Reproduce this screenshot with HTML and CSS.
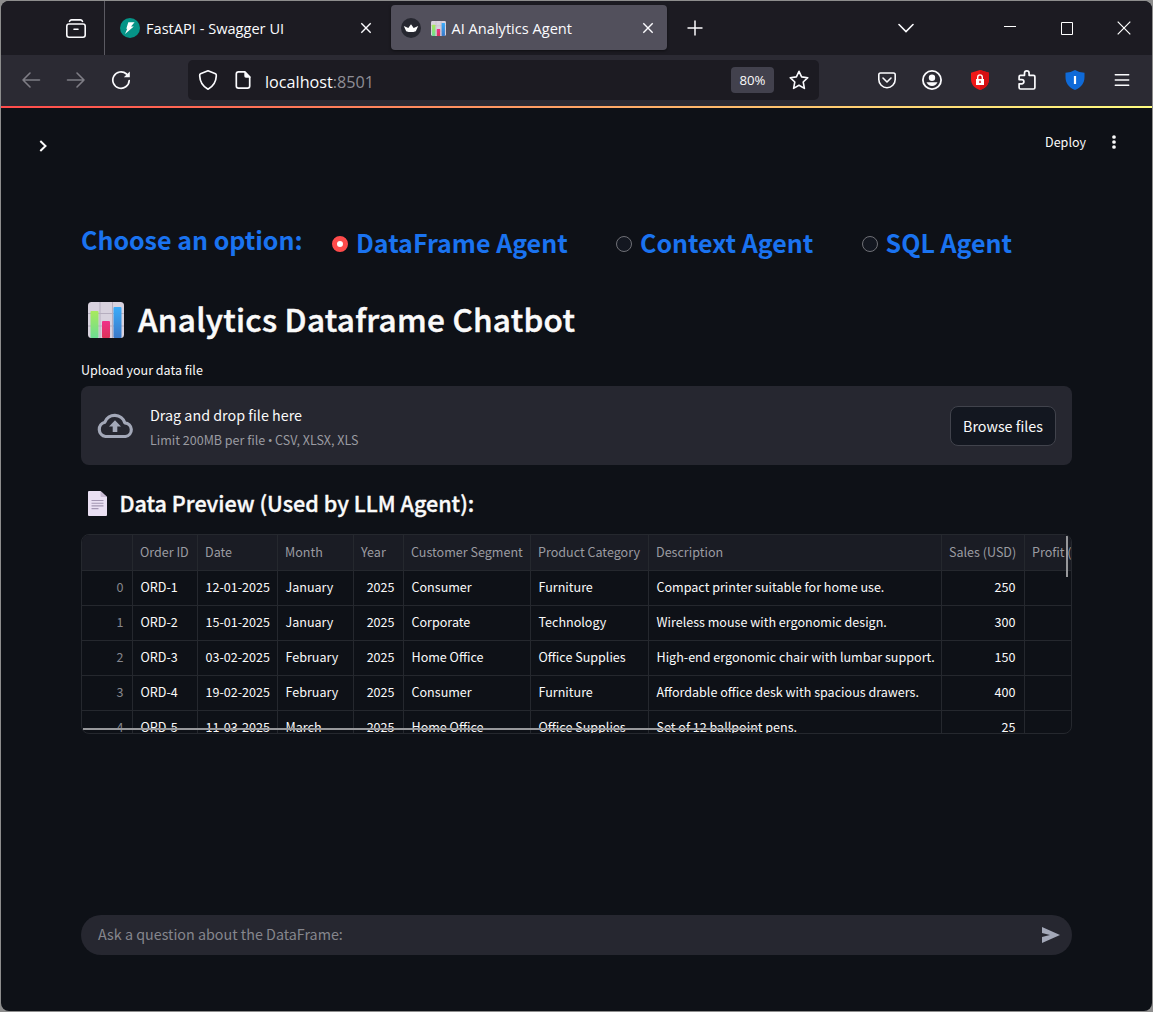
FILE: index.html
```html
<!DOCTYPE html>
<html lang="en">
<head>
<meta charset="utf-8">
<title>AI Analytics Agent</title>
<link rel="stylesheet" href="styles.css">
</head>
<body>
<svg width="0" height="0" class="defs">
  <defs>
    <linearGradient id="green" x1="0" y1="0" x2="0" y2="1"><stop offset="0" stop-color="#a9ea5c"/><stop offset="1" stop-color="#6cdc92"/></linearGradient>
    <linearGradient id="pink" x1="0" y1="0" x2="0" y2="1"><stop offset="0" stop-color="#f0308a"/><stop offset="1" stop-color="#dc3358"/></linearGradient>
    <linearGradient id="blue" x1="0" y1="0" x2="0" y2="1"><stop offset="0" stop-color="#3aacfa"/><stop offset="1" stop-color="#3a78c8"/></linearGradient>
    <symbol id="chart" viewBox="0 0 36 36">
      <rect width="36" height="36" rx="3.5" fill="#d8d2de"/>
      <path d="M12 0V36M24.500 0V36M0 11.500H36M0 24H36" stroke="#b6aebf" stroke-width="1"/>
      <rect x="2.500" y="9" width="8" height="27" rx="1" fill="url(#green)"/>
      <rect x="14" y="19" width="8" height="17" rx="1" fill="url(#pink)"/>
      <rect x="25.500" y="5" width="8" height="31" rx="1" fill="url(#blue)"/>
    </symbol>
  </defs>
</svg>
<div class="window">
  <div class="tabbar">
    <div class="tab-history">
      <svg width="22" height="22" viewBox="0 0 22 22" fill="none" stroke="#fbfbfe" stroke-width="1.6" stroke-linecap="round"><path d="M4.500 3.300C5 2.300 5.500 1.900 6.500 1.900H15.500C16.500 1.900 17 2.300 17.500 3.300"/><rect x="1.800" y="6" width="18.400" height="13.200" rx="2.200"/><path d="M9 11.200H13"/></svg>
    </div>
    <div class="tab">
      <svg class="favicon" width="20" height="20" viewBox="0 0 20 20"><circle cx="10" cy="10" r="10" fill="#059487"/><path d="M8.300 4.300H14.600L11 8.500H13.800L5 15.900L7.300 10.700H6.300Z" fill="#fff"/></svg>
      <span class="tab-title">FastAPI - Swagger UI</span>
      <svg class="tab-close" width="12" height="12" viewBox="0 0 12 12" stroke="#fbfbfe" stroke-width="1.400"><path d="M1.300 1.300L10.700 10.700M10.700 1.300L1.300 10.700"/></svg>
    </div>
    <div class="tab tab-active">
      <svg class="favicon" width="20" height="20" viewBox="0 0 20 20"><circle cx="10" cy="10" r="10" fill="#262730"/><path d="M2.800 8L7.300 9.900L10 6.300L12.700 9.900L17.200 8L14.800 13.200Q10 14.900 5.200 13.200Z" fill="#fff"/></svg>
      <svg class="tab-emoji" width="15" height="15"><use href="#chart"/></svg>
      <span class="tab-title">AI Analytics Agent</span>
      <svg class="tab-close" width="12" height="12" viewBox="0 0 12 12" stroke="#fbfbfe" stroke-width="1.400"><path d="M1.300 1.300L10.700 10.700M10.700 1.300L1.300 10.700"/></svg>
    </div>
    <svg class="new-tab" width="16" height="16" viewBox="0 0 16 16" stroke="#fbfbfe" stroke-width="1.500"><path d="M8 .5V15.500M.5 8H15.500"/></svg>
    <div class="window-controls">
      <svg width="16" height="16" viewBox="0 0 16 16" fill="none" stroke="#fbfbfe" stroke-width="1.600" stroke-linecap="round"><path d="M1 4.500L8 11.500L15 4.500"/></svg>
      <svg class="minimize" width="12" height="14" viewBox="0 0 12 14"><path d="M0 5.500H12" stroke="#fff"/></svg>
      <svg class="maximize" width="12" height="13" viewBox="0 0 12 13" fill="none"><path d="M.5 .5H11.500V12.500H.5Z" stroke="#fff"/></svg>
      <svg class="close" width="14" height="14" viewBox="0 0 14 14"><path d="M.7 .7L13.300 13.300M13.300 .7L.7 13.300" stroke="#fff" stroke-width="1.200"/></svg>
    </div>
  </div>
  <div class="toolbar">
    <svg class="dim" width="20" height="20" viewBox="0 0 20 20" fill="none" stroke="#7e7d85" stroke-width="1.600" stroke-linecap="round" stroke-linejoin="round"><path d="M18.500 10H2M9 3L2 10L9 17"/></svg>
    <svg class="forward" width="20" height="20" viewBox="0 0 20 20" fill="none" stroke="#7e7d85" stroke-width="1.600" stroke-linecap="round" stroke-linejoin="round"><path d="M1.500 10H18M11 3L18 10L11 17"/></svg>
    <svg class="reload" width="20" height="20" viewBox="0 0 20 20" fill="none" stroke="#fbfbfe" stroke-width="1.700" stroke-linecap="round"><path d="M18.200 10.500A8.200 8.200 0 1 1 15.500 4"/><path d="M18.800 1.500V7.300H12.800Z" fill="#fbfbfe" stroke="none"/></svg>
    <div class="urlbar">
      <svg width="20" height="22" viewBox="0 0 20 22" fill="none" stroke="#fbfbfe" stroke-width="1.700" stroke-linejoin="round"><path d="M10 1.800L17.500 4.700C18.300 5 18.400 5.500 18.300 7C18 13.500 15 17.500 10 20.200C5 17.500 2 13.500 1.700 7C1.600 5.500 1.700 5 2.500 4.700Z"/></svg>
      <svg class="page-icon" width="16" height="20" viewBox="0 0 16 20"><path d="M10 1.900H3.500Q1.300 1.900 1.300 4.100V15.900Q1.300 18.100 3.500 18.100H12.500Q14.700 18.100 14.700 15.900V6.800" fill="none" stroke="#fbfbfe" stroke-width="1.700"/><path d="M9.300 1H10.200L15.500 6.500V7.800H11Q9.300 7.800 9.300 6Z" fill="#fbfbfe"/></svg>
      <span class="url">localhost<span class="port">:8501</span></span>
      <span class="zoom">80%</span>
      <svg width="20" height="20" viewBox="0 0 20 20" fill="none" stroke="#fbfbfe" stroke-width="1.600" stroke-linejoin="round"><path d="M10 1.300L12.600 6.900L18.800 7.700L14.200 12L15.400 18.400L10 15.300L4.600 18.400L5.800 12L1.200 7.700L7.400 6.900Z"/></svg>
    </div>
    <div class="extensions">
      <svg width="20" height="20" viewBox="0 0 20 20" fill="none" stroke="#fbfbfe" stroke-width="1.600" stroke-linecap="round" stroke-linejoin="round"><path d="M3.500 3H16.500Q18.200 3 18.200 4.700V9.500A8.200 8.200 0 0 1 1.800 9.500V4.700Q1.800 3 3.500 3Z"/><path d="M6 8L10 12L14 8"/></svg>
      <svg class="account" width="20" height="20" viewBox="0 0 20 20"><circle cx="10" cy="10" r="9.100" fill="none" stroke="#fbfbfe" stroke-width="1.800"/><circle cx="10" cy="7.800" r="3.200" fill="#fbfbfe"/><path d="M4.500 12.300H15.500C14.500 14.700 12.500 16 10 16S5.500 14.700 4.500 12.300Z" fill="#fbfbfe"/></svg>
      <svg width="20" height="20" viewBox="0 0 20 20"><path d="M10 0L19 2.800V9C19 14.500 15.500 18.300 10 20C4.500 18.300 1 14.500 1 9V2.800Z" fill="#f01818"/><path d="M10 0L19 2.800V9C19 14.500 15.500 18.300 10 20Z" fill="#d60f12"/><rect x="6" y="9" width="8" height="6" fill="#fff"/><path d="M7.700 9V7.200A2.300 2.300 0 0 1 12.300 7.200V9" fill="none" stroke="#fff" stroke-width="1.400"/><path d="M10 10.800V13" stroke="#d01010" stroke-width="1.400"/></svg>
      <svg width="20" height="22" viewBox="0 0 20 22" fill="none" stroke="#fbfbfe" stroke-width="1.700" stroke-linejoin="round"><path d="M3.500 6.300H7.500V4.200A2.300 2.300 0 0 1 12.100 4.200V6.300H16.500Q17.900 6.300 17.900 7.700V18.600Q17.900 20 16.500 20H3.500Q2.100 20 2.100 18.600V14.800H4.800A2.100 2.100 0 0 0 4.800 10.600H2.100V7.700Q2.100 6.300 3.500 6.300Z"/></svg>
      <svg width="20" height="20" viewBox="0 0 20 20"><path d="M10 0Q14.500 2.800 19.500 2.800V7C19.500 13 16.500 17.500 10 20C3.500 17.500 .5 13 .5 7V2.800Q5.500 2.800 10 0Z" fill="#0f6ad8"/><path d="M10 6V14" stroke="#fff" stroke-width="2.200"/></svg>
      <svg class="app-menu" width="16" height="16" viewBox="0 0 16 16" stroke="#fbfbfe" stroke-width="1.500" stroke-linecap="round"><path d="M1.300 2.700H14.700M1.300 8H14.700M1.300 13.300H14.700"/></svg>
    </div>
  </div>
  <div class="decoration"></div>
  <div class="app">
    <header class="app-header">
      <svg class="expand" width="8" height="12" viewBox="0 0 8 12" fill="none" stroke="#fafafa" stroke-width="2"><path d="M1.300 1L6.500 6L1.300 11"/></svg>
      <span class="deploy">Deploy</span>
      <svg class="menu" width="4" height="14" viewBox="0 0 4 14" fill="#fafafa"><circle cx="2" cy="2" r="1.850"/><circle cx="2" cy="7" r="1.850"/><circle cx="2" cy="12" r="1.850"/></svg>
    </header>
    <main>
      <div class="options">
        <span class="options-label">Choose an option:</span>
        <label class="option"><span class="radio radio-on"></span>DataFrame Agent</label>
        <label class="option"><span class="radio"></span>Context Agent</label>
        <label class="option"><span class="radio"></span>SQL Agent</label>
      </div>
      <h1><svg width="36" height="36"><use href="#chart"/></svg><span>Analytics Dataframe Chatbot</span></h1>
      <p class="upload-label">Upload your data file</p>
      <section class="dropzone">
        <svg width="38" height="26" viewBox="0 0 38 26"><path d="M9.500 23.500A7.300 7.300 0 0 1 8.800 9.200A10.600 10.600 0 0 1 28.800 9.800A6.900 6.900 0 0 1 29.500 23.500Z" fill="none" stroke="#a3a8b8" stroke-width="3.200" stroke-linejoin="round"/><path d="M19 7.300L25 13.500H21.300V19H16.700V13.500H13Z" fill="#a3a8b8"/></svg>
        <div class="drop-text">
          <span class="drop-title">Drag and drop file here</span>
          <span class="drop-limit">Limit 200MB per file <span class="bullet">•</span> CSV, XLSX, XLS</span>
        </div>
        <button class="browse">Browse files</button>
      </section>
      <h3><svg width="19" height="25" viewBox="0 0 19 25"><path d="M1 0H12.500L19 6V24Q19 25 18 25H1Q0 25 0 24V1Q0 0 1 0Z" fill="#eae0f3"/><path d="M12.500 0L19 6H13.500Q12.500 6 12.500 5Z" fill="#c9bcd4"/><path d="M3.500 9.500H15.500M3.500 12.200H15.500M3.500 14.900H15.500M3.500 17.600H10.500" stroke="#a497b3" stroke-width="1.100"/></svg>Data Preview (Used by LLM Agent):</h3>
      <div class="grid">
        <table>
          <colgroup><col class="c-idx"><col class="c-id"><col class="c-date"><col class="c-month"><col class="c-year"><col class="c-seg"><col class="c-cat"><col class="c-desc"><col class="c-sales"><col class="c-profit"></colgroup>
          <thead><tr><th></th><th>Order ID</th><th>Date</th><th>Month</th><th>Year</th><th>Customer Segment</th><th>Product Category</th><th>Description</th><th>Sales (USD)</th><th>Profit (</th></tr></thead>
          <tbody>
            <tr><td class="idx">0</td><td>ORD-1</td><td>12-01-2025</td><td>January</td><td class="num">2025</td><td>Consumer</td><td>Furniture</td><td>Compact printer suitable for home use.</td><td class="num">250</td><td></td></tr>
            <tr><td class="idx">1</td><td>ORD-2</td><td>15-01-2025</td><td>January</td><td class="num">2025</td><td>Corporate</td><td>Technology</td><td>Wireless mouse with ergonomic design.</td><td class="num">300</td><td></td></tr>
            <tr><td class="idx">2</td><td>ORD-3</td><td>03-02-2025</td><td>February</td><td class="num">2025</td><td>Home Office</td><td>Office Supplies</td><td>High-end ergonomic chair with lumbar support.</td><td class="num">150</td><td></td></tr>
            <tr><td class="idx">3</td><td>ORD-4</td><td>19-02-2025</td><td>February</td><td class="num">2025</td><td>Consumer</td><td>Furniture</td><td>Affordable office desk with spacious drawers.</td><td class="num">400</td><td></td></tr>
            <tr><td class="idx">4</td><td>ORD-5</td><td>11-03-2025</td><td>March</td><td class="num">2025</td><td>Home Office</td><td>Office Supplies</td><td>Set of 12 ballpoint pens.</td><td class="num">25</td><td></td></tr>
          </tbody>
        </table>
        <span class="scroll-x"></span>
        <span class="scroll-y"></span>
      </div>
    </main>
    <footer class="chat">
      <span>Ask a question about the DataFrame:</span>
      <svg width="18" height="16" viewBox="0 0 18 16"><path d="M0 0L18 8L0 16V10L8 8L0 6Z" fill="#a3a8b8"/></svg>
    </footer>
  </div>
</div>
</body>
</html>
```
FILE: styles.css
```css
* { box-sizing: border-box; }
body {
  margin: 0;
  padding: 1px 1px 1px 1px;
  height: 1012px;
  overflow: hidden;
  background: #8d8d8d;
  font-family: "Noto Sans CJK SC", "Noto Sans", sans-serif;
  color: #fafafa;
}
svg { display: block; flex: none; }
.defs { position: absolute; }
.window {
  height: 1010px;
  border-radius: 8px;
  overflow: hidden;
  background: #0e1117;
}

/* Tab strip */
.tabbar {
  display: flex;
  align-items: center;
  height: 54px;
  background: #1c1b22;
  font-family: "Open Sans", "Noto Sans", sans-serif;
  font-size: 14.6px;
  color: #fbfbfe;
}
.tab-history {
  width: 104px;
  height: 54px;
  padding: 17px 0 0 64px;
  border-right: 1px solid #5b5a62;
}
.tab {
  display: flex;
  align-items: center;
  width: 276px;
  height: 45px;
  margin-bottom: 1px;
  padding: 1px 13.5px 0 10px;
}
.tab:not(.tab-active) { width: 281px; padding-left: 15px; padding-right: 14.5px; margin-right: 5px; }
.tab-active { background: #52505c; border-radius: 4px; box-shadow: 0 1px 3px rgba(0, 0, 0, .5); }
.tab-title { margin-left: 6px; line-height: 20px; white-space: nowrap; }
.tab-emoji { margin-left: 9.5px; }
.tab-close { margin-left: auto; }
.new-tab { margin-left: 19.5px; }
.window-controls { display: flex; align-items: center; flex: 1; padding-left: 195.5px; }
.minimize { margin-left: 90px; }
.maximize { margin-left: 45px; }
.close { margin-left: 43.5px; }

/* Navigation bar */
.toolbar {
  display: flex;
  align-items: center;
  height: 51px;
  padding: 0 21px 1px 20px;
  background: #2b2a33;
}
.forward, .reload { margin-left: 25px; }
.urlbar {
  display: flex;
  align-items: center;
  width: 631px;
  height: 40px;
  margin-left: 57px;
  padding: 0 10px;
  border-radius: 5px;
  background: #1c1b22;
  font-family: "Open Sans", "Noto Sans", sans-serif;
}
.page-icon { margin-left: 17px; }
.url { margin-top: 3px; margin-left: 14px; font-size: 16.2px; line-height: 22px; color: #fbfbfe; }
.port { color: #8f8e96; }
.zoom {
  width: 43px;
  height: 26px;
  margin-left: auto;
  margin-right: 15px;
  border-radius: 4px;
  background: #42414d;
  font-size: 13.2px;
  line-height: 27px;
  text-align: center;
}
.extensions { display: flex; align-items: center; width: 253px; margin-left: 58px; gap: 27.6px; }
.account { margin-left: -2.5px; }
.app-menu { margin-left: auto; }
.decoration { height: 2px; background: linear-gradient(90deg, #ff4b4b, #fffd80); }

/* Page */
.app { height: 903px; padding: 0 80px; }
.app-header { display: flex; height: 114px; margin: 0 -42px 0 -42px; padding: 24px 0 0 0; }
.expand { margin-top: 8px; }
.deploy { margin-left: auto; font-size: 12.53px; line-height: 20px; }
.menu { margin: 3px -2px 0 26px; }
main { height: 693px; }
.options {
  display: flex;
  height: 40px;
  font-size: 25px;
  font-weight: 700;
  line-height: 40px;
  color: #1a73f0;
  white-space: nowrap;
}
.options-label { width: 251px; margin-top: -3px; }
.option { display: flex; align-items: center; gap: 8px; margin-right: 48.3px; }
.radio { width: 16px; height: 16px; margin-top: 4px; border: 1px solid #6f7076; border-radius: 50%; background: #131720; }
.radio-on { border: 5px solid #ff4b4b; background: #fff; }
h1, h3 { display: flex; align-items: center; margin: 0; font-weight: 500; white-space: nowrap; }
h1 {
  height: 46px;
  margin-top: 35px;
  padding-left: 7px;
  gap: 14px;
  font-size: 31.5px;
  line-height: 46px;
  letter-spacing: .27px;
  -webkit-text-stroke: .5px #fafafa;
}
h1 span { margin-top: -5px; }
.upload-label { margin: 16px 0 0; font-size: 12.56px; line-height: 22px; }
.dropzone {
  display: flex;
  align-items: center;
  height: 79px;
  margin-top: 5px;
  padding: 0 16px 0 15px;
  border-radius: 8px;
  background: #262730;
}
.drop-text { display: flex; flex-direction: column; margin-left: 16px; padding-top: 4px; white-space: nowrap; }
.drop-title { font-size: 14.32px; line-height: 24px; }
.drop-limit { font-size: 12.53px; line-height: 26px; color: #9a9ba1; }
.bullet { font-family: "Open Sans", sans-serif; font-size: 13px; line-height: 1; margin: 0 -.3px; }
.browse {
  width: 106px;
  height: 40px;
  margin-left: auto;
  padding: 0;
  border: 1px solid #41434c;
  border-radius: 8px;
  background: #131720;
  color: #fafafa;
  font-family: inherit;
  font-size: 14.32px;
}
h3 {
  height: 32px;
  margin-top: 22px;
  padding-left: 7px;
  gap: 12.5px;
  font-size: 21.55px;
  line-height: 32px;
  -webkit-text-stroke: .35px #fafafa;
}

/* Data grid */
.grid {
  position: relative;
  height: 200px;
  margin-top: 15px;
  border: 1px solid #25282e;
  border-radius: 8px;
  overflow: hidden;
}
table { width: 989px; table-layout: fixed; border-collapse: separate; border-spacing: 0; font-size: 12.55px; }
.c-idx { width: 51px; }
.c-id { width: 65px; }
.c-date { width: 80px; }
.c-month { width: 76px; }
.c-year { width: 50px; }
.c-seg { width: 127px; }
.c-cat { width: 118px; }
.c-desc { width: 293px; }
.c-sales { width: 83px; }
.c-profit { width: 46px; }
th, td {
  height: 35px;
  padding: 0 0 3px 7.500px;
  border-right: 1px solid #25282e;
  border-bottom: 1px solid #25282e;
  line-height: 18px;
  text-align: left;
  white-space: nowrap;
  overflow: hidden;
}
th { height: 36px; padding: 0 0 2px 7px; background: #1a1c24; color: #9a9ba1; font-weight: 400; }
th:last-child, td:last-child { border-right: 0; }
.num, .idx { padding-right: 8.500px; text-align: right; }
.idx { color: #86878d; }
.scroll-x, .scroll-y { position: absolute; background: #97989b; }
.scroll-x { left: 1px; top: 193px; width: 675px; height: 2px; }
.scroll-y { left: 984px; top: 1px; width: 2px; height: 41px; }

.chat {
  display: flex;
  align-items: center;
  justify-content: space-between;
  height: 40px;
  padding: 0 12px 0 17px;
  border-radius: 20px;
  background: #262730;
  color: #85868d;
  font-size: 14.32px;
  line-height: 36px;
}
.chat span { margin-top: -2px; }
```
